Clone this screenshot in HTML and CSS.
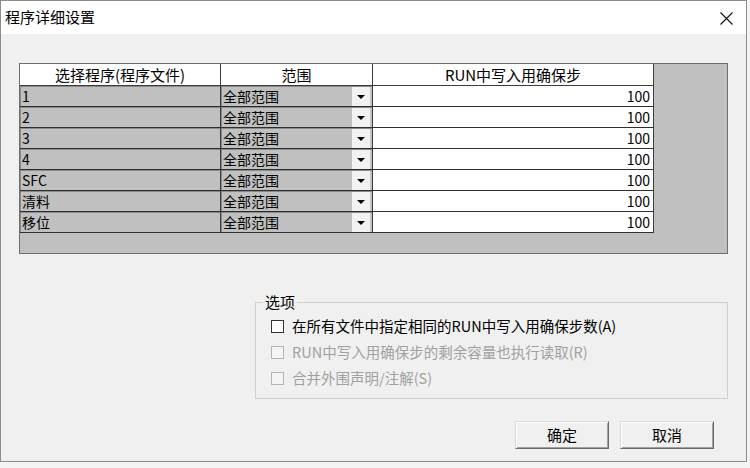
FILE: index.html
```html
<!DOCTYPE html>
<html lang="zh-CN">
<head>
<meta charset="utf-8">
<title>程序详细设置</title>
<link rel="stylesheet" href="styles.css">
</head>
<body>
<div class="window">
  <div class="titlebar">
    <span class="title">程序详细设置</span>
    <svg class="close" width="13" height="13" viewBox="0 0 13 13"><path d="M0.5 0.5L12.5 12.5M12.5 0.5L0.5 12.5" stroke="#111" stroke-width="1.1" fill="none"/></svg>
  </div>
  <div class="content">
    <div class="grid">
      <div class="table">
        <div class="hcell">选择程序(程序文件)</div>
        <div class="hcell">范围</div>
        <div class="hcell">RUN中写入用确保步</div>

        <div class="cell name">1</div>
        <div class="cell range"><span>全部范围</span><span class="drop"><i></i></span></div>
        <div class="cell num">100</div>

        <div class="cell name">2</div>
        <div class="cell range"><span>全部范围</span><span class="drop"><i></i></span></div>
        <div class="cell num">100</div>

        <div class="cell name">3</div>
        <div class="cell range"><span>全部范围</span><span class="drop"><i></i></span></div>
        <div class="cell num">100</div>

        <div class="cell name">4</div>
        <div class="cell range"><span>全部范围</span><span class="drop"><i></i></span></div>
        <div class="cell num">100</div>

        <div class="cell name">SFC</div>
        <div class="cell range"><span>全部范围</span><span class="drop"><i></i></span></div>
        <div class="cell num">100</div>

        <div class="cell name">清料</div>
        <div class="cell range"><span>全部范围</span><span class="drop"><i></i></span></div>
        <div class="cell num">100</div>

        <div class="cell name">移位</div>
        <div class="cell range"><span>全部范围</span><span class="drop"><i></i></span></div>
        <div class="cell num">100</div>
      </div>
    </div>

    <fieldset class="options">
      <legend>选项</legend>
      <div class="opt"><span class="box"></span><span>在所有文件中指定相同的RUN中写入用确保步数(A)</span></div>
      <div class="opt disabled"><span class="box"></span><span>RUN中写入用确保步的剩余容量也执行读取(R)</span></div>
      <div class="opt disabled"><span class="box"></span><span>合并外围声明/注解(S)</span></div>
    </fieldset>

    <div class="buttons">
      <button class="btn">确定</button>
      <button class="btn">取消</button>
    </div>
  </div>
</div>
</body>
</html>
```

FILE: styles.css
```css
html, body {
  margin: 0;
  padding: 0;
  background: #f4f4f4;
}

body {
  font-family: "Noto Sans CJK SC", "Noto Sans", sans-serif;
  color: #000;
}

.window {
  box-sizing: border-box;
  width: 747px;
  height: 462px;
  border: 1px solid #8c8c8c;
  background: #f0f0f0;
  display: flex;
  flex-direction: column;
}

.titlebar {
  height: 33px;
  background: #fff;
  display: flex;
  align-items: center;
  justify-content: space-between;
  padding: 0 13px 0 4px;
}

.title {
  font-size: 15px;
  line-height: 20px;
  margin-top: -2px;
}

.close {
  display: block;
  margin-top: 1px;
}

.content {
  display: flex;
  flex-direction: column;
  padding-left: 18px;
}

.grid {
  box-sizing: border-box;
  margin-top: 29px;
  width: 709px;
  height: 191px;
  border: 1px solid #6e6e6e;
  background: #c0c0c0;
}

.table {
  display: grid;
  grid-template-columns: 201px 152px 281px;
  grid-auto-rows: 21px;
  grid-template-rows: 22px;
  width: 634px;
}

.hcell {
  box-sizing: border-box;
  background: #fff;
  border-right: 1px solid #3c3c3c;
  border-bottom: 1px solid #3c3c3c;
  font-size: 15px;
  line-height: 22px;
  text-align: center;
  white-space: nowrap;
}

.cell {
  box-sizing: border-box;
  border-right: 1px solid #3c3c3c;
  border-bottom: 1px solid #2e2e2e;
  font-size: 14px;
  line-height: 20px;
  white-space: nowrap;
}

.name {
  background: #c0c0c0;
  padding-left: 2px;
  box-shadow: inset 1px 1px 0 #8a8a8a;
}

.range {
  background: #c0c0c0;
  display: flex;
  justify-content: space-between;
  padding-left: 2px;
  box-shadow: inset 1px 1px 0 #8a8a8a;
}

.drop {
  box-sizing: border-box;
  width: 19px;
  height: 19px;
  margin: 1px 1px 0 0;
  background: #f2f2f2;
  border-right: 1px solid #c8c8c8;
  display: flex;
  align-items: center;
  justify-content: center;
}

.drop i {
  display: block;
  width: 0;
  height: 0;
  border-left: 4px solid transparent;
  border-right: 4px solid transparent;
  border-top: 4px solid #000;
  margin-top: 1px;
}

.num {
  background: #fff;
  text-align: right;
  padding-right: 3px;
}

.options {
  box-sizing: border-box;
  margin: 38px 0 0 236px;
  width: 473px;
  height: 107px;
  padding: 0 0 0 15px;
  border: 1px solid #cfcfcf;
  min-inline-size: 0;
}

.options legend {
  font-size: 15px;
  line-height: 20px;
  padding: 0 2px;
  margin-left: -8px;
}

.opt {
  display: flex;
  align-items: center;
  gap: 8px;
  height: 26px;
  font-size: 14.5px;
  line-height: 20px;
  white-space: nowrap;
}

.opt:first-of-type {
  margin-top: 1px;
}

.box {
  box-sizing: border-box;
  width: 13px;
  height: 13px;
  background: #fff;
  border: 1px solid #333;
  flex: none;
}

.disabled {
  color: #a0a0a0;
}

.disabled .box {
  background: #f4f4f4;
  border-color: #b4b4b4;
}

.buttons {
  display: flex;
  justify-content: flex-end;
  gap: 11px;
  margin-top: 22px;
  padding-right: 32px;
}

.btn {
  box-sizing: border-box;
  width: 94px;
  height: 28px;
  padding: 0;
  background: #f0f0f0;
  font-family: "Noto Sans CJK SC", sans-serif;
  font-size: 15px;
  line-height: 20px;
  color: #000;
  border: 1px solid;
  border-color: #d8d8d8 #6a6a6a #6a6a6a #d8d8d8;
  box-shadow: inset 1px 1px 0 #fff, inset -1px -1px 0 #a0a0a0;
}
```
